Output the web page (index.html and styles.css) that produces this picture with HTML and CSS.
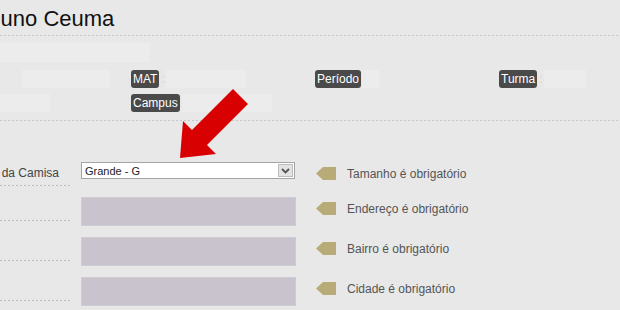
FILE: index.html
```html
<!DOCTYPE html>
<html lang="pt-BR">
<head>
    <meta charset="UTF-8">
    <meta name="viewport" content="width=device-width, initial-scale=1.0">
    <title>Aluno Ceuma</title>
    <link rel="stylesheet" href="styles.css">
</head>
<body>
    <div class="page">
        <h1 class="title">Aluno Ceuma</h1>
        <div class="rule"></div>

        <div class="info">
            <div class="info-top"><span class="blur blur-wide"></span></div>
            <div class="info-grid">
                <div class="cell"><span class="blur blur-label"></span></div>
                <div class="cell"><span class="badge">MAT</span><span class="colon">:</span><span class="blur blur-mat"></span></div>
                <div class="cell"><span class="badge">Período</span><span class="blur blur-per"></span></div>
                <div class="cell"><span class="badge">Turma</span><span class="colon">:</span><span class="blur blur-turma"></span></div>

                <div class="cell"><span class="blur blur-short"></span></div>
                <div class="cell"><span class="badge">Campus</span><span class="blur blur-campus"></span></div>
            </div>
        </div>
        <div class="rule"></div>

        <form class="form">
            <div class="row">
                <div class="label"><span>Tamanho da Camisa</span></div>
                <div class="select">
                    <span class="select-value">Grande - G</span>
                    <span class="select-btn">
                        <svg width="9" height="6" viewBox="0 0 9 6"><path d="M1 1 L4.5 4.5 L8 1" fill="none" stroke="#555" stroke-width="1.8"/></svg>
                    </span>
                </div>
                <div class="msg"><span class="tag"></span>Tamanho é obrigatório</div>
            </div>
            <div class="row">
                <div class="label"></div>
                <div class="field"></div>
                <div class="msg"><span class="tag"></span>Endereço é obrigatório</div>
            </div>
            <div class="row">
                <div class="label"></div>
                <div class="field"></div>
                <div class="msg"><span class="tag"></span>Bairro é obrigatório</div>
            </div>
            <div class="row">
                <div class="label"></div>
                <div class="field"></div>
                <div class="msg"><span class="tag"></span>Cidade é obrigatório</div>
            </div>
        </form>

        <!-- red pointer over the size field -->
        <svg class="arrow" width="620" height="310" viewBox="0 0 620 310">
            <polygon points="233,89 248,104 207,145 216,154 180,158 183,121 192,130" fill="#d80000"/>
        </svg>
    </div>
</body>
</html>
```

FILE: styles.css
```css
body {
    margin: 0;
    background-color: #e8e8e8;
    font-family: 'Liberation Sans', Arial, sans-serif;
    overflow: hidden;
}

.page {
    position: relative;
    width: 620px;
    height: 310px;
    overflow: hidden;
}

.title {
    margin: 4px 0 1px -19px;
    font-size: 22px;
    font-weight: normal;
    line-height: 30px;
    color: #111;
}

.rule {
    height: 1px;
    background: repeating-linear-gradient(to right, #c8c8c8 0 2px, transparent 2px 4px);
}

.info {
    padding: 7px 0 8px;
}

.info-top {
    height: 19px;
    margin-bottom: 8px;
}

.blur {
    display: inline-block;
    height: 18px;
    background-color: rgba(255, 255, 255, 0.18);
}

.blur-wide { width: 150px; height: 19px; }
.blur-label { width: 88px; margin-left: 22px; }
.blur-short { width: 50px; }
.blur-mat { width: 80px; margin-left: 1px; }
.blur-per { width: 17px; margin-left: 1px; }
.blur-turma { width: 42px; margin-left: 1px; }
.blur-campus { width: 90px; margin-left: 2px; }

.info-grid {
    display: grid;
    grid-template-columns: 131px 184px 184px 1fr;
    grid-auto-rows: 18px;
    row-gap: 6px;
}

.cell {
    display: flex;
    align-items: center;
}

.badge {
    display: inline-block;
    height: 18px;
    padding: 0 2px;
    font-size: 12px;
    line-height: 18px;
    color: #fff;
    background-color: #4a4a4a;
    border-radius: 3px;
}

.colon {
    width: 4px;
    margin-left: 2px;
    font-size: 12px;
    color: #e5cfa8;
}

.form {
    display: flex;
    flex-direction: column;
    gap: 11px;
    padding-top: 41px;
}

.row {
    display: flex;
    align-items: flex-start;
}

.label {
    display: flex;
    justify-content: flex-end;
    flex-shrink: 0;
    width: 59px;
    height: 23px;
    padding-right: 12px;
    padding-bottom: 1px;
    font-size: 12px;
    line-height: 23px;
    color: #444;
    white-space: nowrap;
    background: repeating-linear-gradient(to right, #bdbdbd 0 2px, transparent 2px 4px) bottom / 100% 1px no-repeat;
}

.label span {
    flex-shrink: 0;
}

.select {
    display: flex;
    align-items: center;
    box-sizing: border-box;
    width: 214px;
    height: 17px;
    margin-left: 10px;
    border: 1px solid #a4a4a4;
    background-color: #fff;
}

.select-value {
    flex: 1;
    padding-left: 3px;
    font-size: 11px;
    color: #222;
}

.select-btn {
    display: flex;
    align-items: center;
    justify-content: center;
    box-sizing: border-box;
    width: 15px;
    height: 13px;
    margin-right: 1px;
    border: 1px solid #bdbdbd;
    background-color: #e3e3e3;
}

.field {
    box-sizing: border-box;
    width: 215px;
    height: 29px;
    margin-left: 10px;
    border: 1px solid #cfcbd3;
    background-color: #c8c3cd;
}

.msg {
    display: flex;
    align-items: center;
    height: 23px;
    margin-left: 20px;
    font-size: 12px;
    color: #555;
    white-space: nowrap;
}

.row:first-child .msg {
    margin-left: 21px;
}

.tag {
    width: 20px;
    height: 13px;
    margin-right: 11px;
    background-color: #b8ab78;
    clip-path: polygon(0 50%, 35% 0, 100% 0, 100% 100%, 35% 100%);
}

.arrow {
    position: absolute;
    top: 0;
    left: 0;
    pointer-events: none;
}
```
